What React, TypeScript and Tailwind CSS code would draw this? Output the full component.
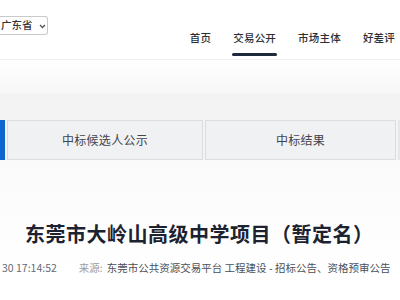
const FONT = "font-['Noto_Sans_CJK_SC','Noto_Sans',sans-serif]";

const NAV = [
  { label: "首页", active: false },
  { label: "交易公开", active: true },
  { label: "市场主体", active: false },
  { label: "好差评", active: false },
];

function Header() {
  return (
    <div className="h-[60px] bg-white border-b border-[#f0f0f0] flex items-start">
      <div className="mt-[16px] h-[19px] w-[48px] border border-l-0 border-[#c9c9c9] rounded-r-[3px] flex items-center pl-[1px] gap-[6px]">
        <span className="text-[10.5px] leading-none text-[#333] font-medium">广东省</span>
        <svg width="7" height="5" viewBox="0 0 7 5" className="mt-[1px]">
          <path d="M1 1 L3.5 3.5 L6 1" stroke="#555" strokeWidth="1.3" fill="none" />
        </svg>
      </div>
      <nav className="ml-auto mr-[5px] flex mt-[31px] gap-[22px]">
        {NAV.map((item) => (
          <div key={item.label} className="flex flex-col items-stretch">
            <span className="text-[10.5px] leading-[14px] font-medium text-[#2c2f36] tracking-[0.2px]">
              {item.label}
            </span>
            <div className={`mt-[8px] h-[2.5px] -mx-[1px] rounded-full ${item.active ? "bg-[#1e2a3c]" : "bg-transparent"}`} />
          </div>
        ))}
      </nav>
    </div>
  );
}

function Tabs() {
  return (
    <div className="flex h-[40px] gap-[2px]">
      <div className="w-[5px] bg-[#1064cf]" />
      <div className="w-[196px] border border-[#dcdde0] bg-[#f0f1f3] flex items-center justify-center">
        <span className="text-[12px] text-[#3f4450] tracking-[0.3px]">中标候选人公示</span>
      </div>
      <div className="w-[191px] border border-[#dcdde0] bg-[#f0f1f3] flex items-center justify-center">
        <span className="text-[12px] text-[#3f4450] tracking-[0.3px]">中标结果</span>
      </div>
      <div className="flex-1 border border-[#e6e7ea] bg-[#f3f4f5]" />
    </div>
  );
}

export default function App() {
  return (
    <div className={`w-[400px] h-[300px] overflow-hidden bg-white ${FONT}`}>
      <Header />
      <div className="h-[33px] bg-gradient-to-b from-white to-[#f7f7f8]" />
      <div className="bg-[#f3f3f4] pt-[27px]">
        <Tabs />
      </div>
      <div className="bg-gradient-to-b from-[#fafafa] to-white pt-[60px]">
        <h1 className="pl-[25px] text-[20px] leading-[28px] font-bold text-[#1c2230] whitespace-nowrap tracking-[0.5px]">
          东莞市大岭山高级中学项目（暂定名）
        </h1>
        <div className="mt-[13px] flex items-center whitespace-nowrap text-[10.5px] leading-[14px]">
          <span className="pl-[2px] text-[#666a72]">30 17:14:52</span>
          <span className="ml-[22px] text-[#9a9da3]">来源:</span>
          <span className="ml-[4px] text-[#4b4f57]">东莞市公共资源交易平台 工程建设 - 招标公告、资格预审公告</span>
        </div>
      </div>
    </div>
  );
}
